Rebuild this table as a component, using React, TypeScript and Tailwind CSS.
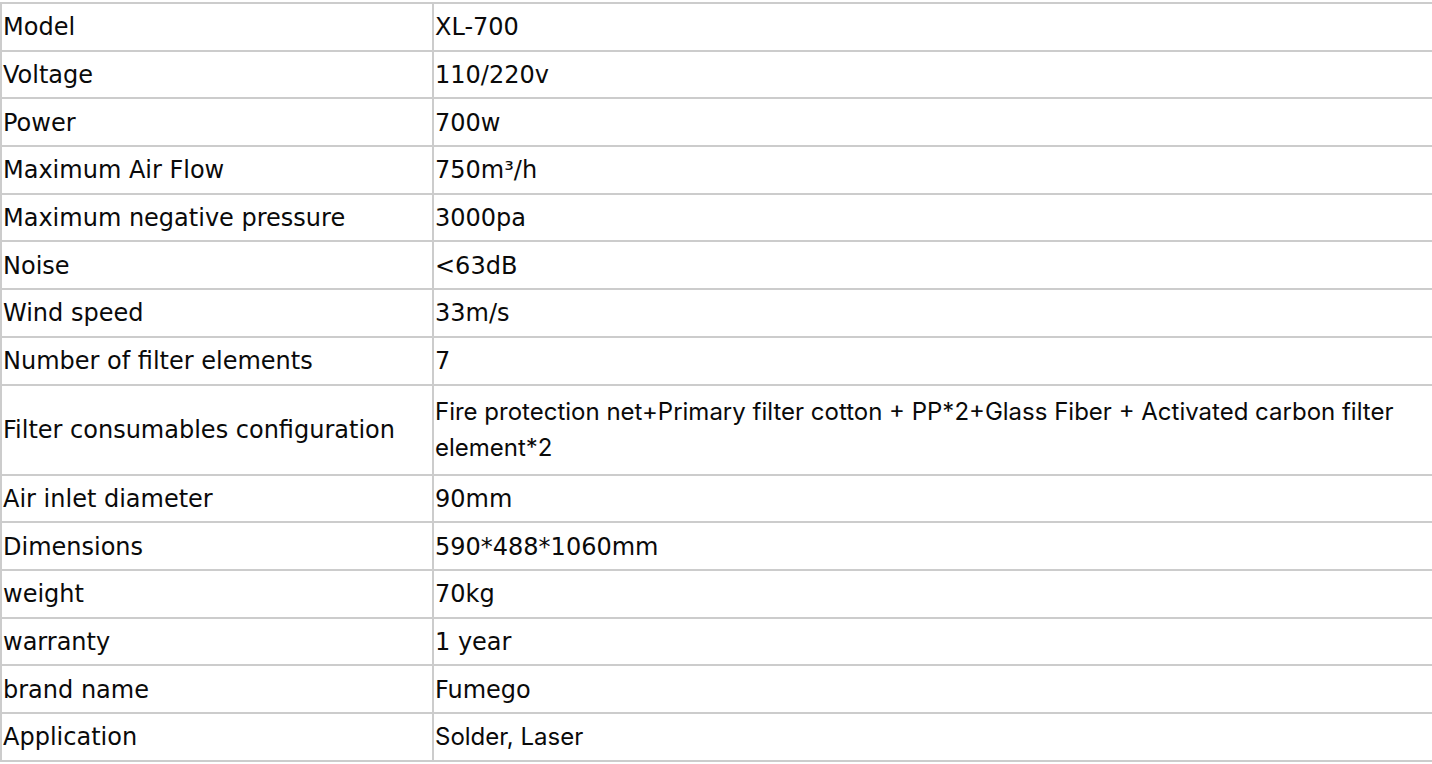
import React from "react";

type Row = { k: string; v: string; inter?: boolean; tall?: boolean };

const rows: Row[] = [
  { k: "Model", v: "XL-700" },
  { k: "Voltage", v: "110/220v" },
  { k: "Power", v: "700w" },
  { k: "Maximum Air Flow", v: "750m³/h" },
  { k: "Maximum negative pressure", v: "3000pa" },
  { k: "Noise", v: "<63dB" },
  { k: "Wind speed", v: "33m/s" },
  { k: "Number of filter elements", v: "7" },
  {
    k: "Filter consumables configuration",
    v: "Fire protection net+Primary filter cotton + PP*2+Glass Fiber + Activated carbon filter element*2",
    inter: true,
    tall: true,
  },
  { k: "Air inlet diameter", v: "90mm" },
  { k: "Dimensions", v: "590*488*1060mm" },
  { k: "weight", v: "70kg" },
  { k: "warranty", v: "1 year" },
  { k: "brand name", v: "Fumego" },
  { k: "Application", v: "Solder, Laser", inter: true },
];

export default function App() {
  return (
    <div className="w-[1432px] h-[764px] overflow-hidden bg-white pt-[2px]">
      <div
        className="border-t-2 border-l-2 border-[#cccccc] text-[#0a0a0a]"
        style={{ fontFamily: '"DejaVu Sans", Verdana, sans-serif' }}
      >
        {rows.map((r, i) => (
          <div
            key={i}
            className={`flex border-b-2 border-[#cccccc] ${r.tall ? "h-[90px]" : "h-[47.7px]"}`}
          >
            <div className="w-[432px] shrink-0 border-r-2 border-[#cccccc] flex items-center pl-[1px] pt-[1px] text-[24px]">
              {r.k}
            </div>
            <div
              className={`flex-1 flex items-center pl-[1px] pt-[1px] ${
                r.inter ? "text-[24px] leading-[36px]" : "text-[24px]"
              }`}
              style={r.inter ? { fontFamily: 'Inter, "Noto Sans", sans-serif' } : undefined}
            >
              <span className="block">{r.v}</span>
            </div>
          </div>
        ))}
      </div>
    </div>
  );
}
